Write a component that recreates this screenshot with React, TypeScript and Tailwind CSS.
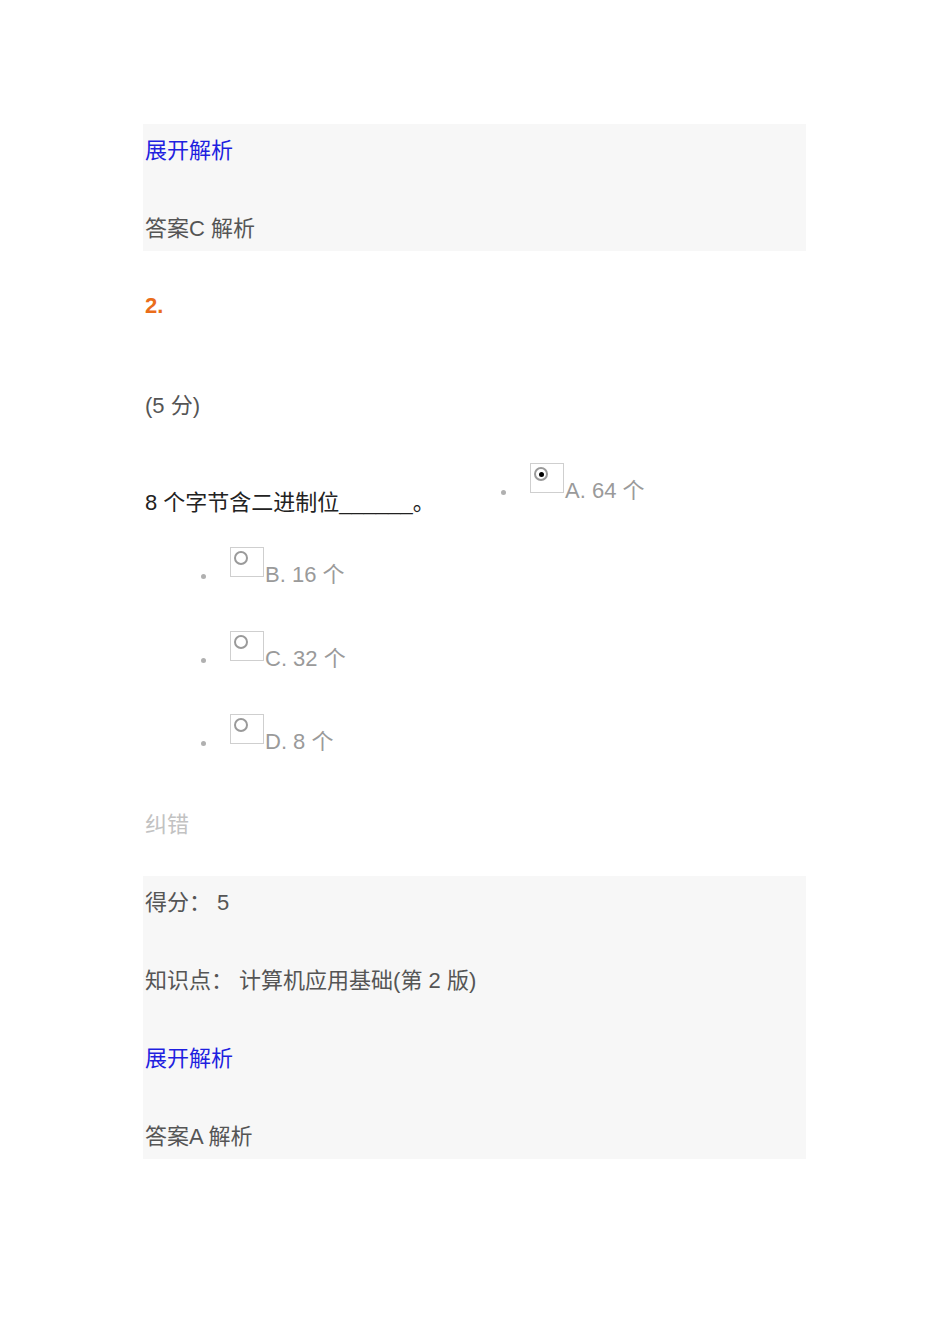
import React from 'react';

const font = { fontFamily: '"Liberation Sans", "Noto Sans CJK SC", sans-serif' };

interface OptionProps {
  label: string;
  checked?: boolean;
}

const Option: React.FC<OptionProps> = ({ label, checked }) => (
  <li className="flex items-start">
    <span className="mt-[27px] h-[5px] w-[5px] rounded-full bg-[#b0b0b0]" />
    <span className="ml-[24px] h-[30px] w-[34px] border border-[#cfcfcf] bg-white pl-[3px] pt-[3px]">
      <span className="flex h-[14px] w-[14px] items-center justify-center rounded-full border-2 border-[#9a9a9a] bg-white">
        {checked && <span className="h-[5px] w-[5px] rounded-full bg-black" />}
      </span>
    </span>
    <span className="ml-[1px] mt-[17px] h-[22px] leading-[22px] text-[#9a9a9a]">{label}</span>
  </li>
);

export default function App() {
  return (
    <div className="min-h-[1344px] w-[950px] bg-white text-[22px]" style={font}>
      <div className="ml-[143px] w-[663px] pt-[124px]">
        {/* 上一题的解析 */}
        <div className="bg-[#f7f7f7] pb-[11px] pl-[2px] pt-[16px]">
          <div className="h-[22px] leading-[22px] text-[#1f1fe0]">展开解析</div>
          <div className="mt-[56px] h-[22px] leading-[22px] text-[#555]">答案C 解析</div>
        </div>

        <div className="mt-[44px] h-[22px] pl-[2px] font-semibold leading-[22px] text-[#ea6d1a]">2.</div>
        <div className="mt-[78px] h-[22px] pl-[2px] leading-[22px] text-[#555]">(5 分)</div>

        <div className="mt-[46px] flex items-start">
          <div className="mt-[29px] h-[22px] w-[358px] pl-[2px] leading-[22px] text-[#222]">
            8 个字节含二进制位______。
          </div>
          <ul>
            <Option label="A. 64 个" checked />
          </ul>
        </div>

        <ul className="pl-[58px]">
          <div className="mt-[33px]">
            <Option label="B. 16 个" />
          </div>
          <div className="mt-[45px]">
            <Option label="C. 32 个" />
          </div>
          <div className="mt-[44px]">
            <Option label="D. 8 个" />
          </div>
        </ul>

        <div className="mt-[61px] h-[22px] pl-[2px] leading-[22px] text-[#c2c2c2]">纠错</div>

        <div className="mt-[40px] bg-[#f7f7f7] pb-[11px] pl-[2px] pt-[16px] text-[#555]">
          <div className="h-[22px] leading-[22px]">得分： 5</div>
          <div className="mt-[56px] h-[22px] leading-[22px]">知识点： 计算机应用基础(第 2 版)</div>
          <div className="mt-[56px] h-[22px] leading-[22px] text-[#1f1fe0]">展开解析</div>
          <div className="mt-[56px] h-[22px] leading-[22px]">答案A 解析</div>
        </div>
      </div>
    </div>
  );
}
